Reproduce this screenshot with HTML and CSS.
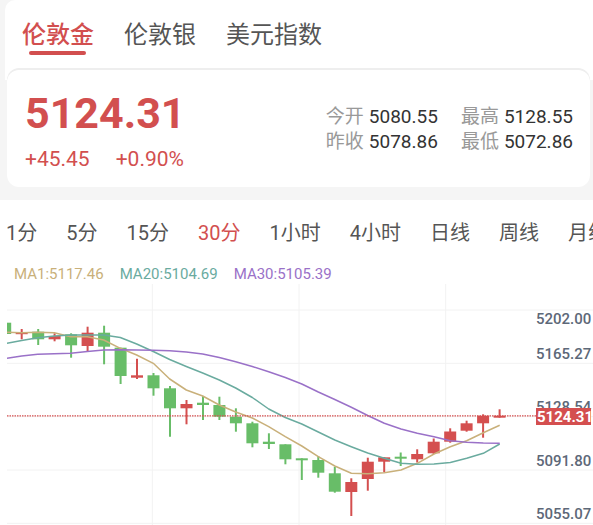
FILE: index.html
```html
<!DOCTYPE html>
<html lang="zh-CN">
<head>
<meta charset="utf-8">
<title>伦敦金</title>
<link rel="stylesheet" href="styles.css">
</head>
<body>
<div class="header">
  <div class="tab active">伦敦金</div>
  <div class="tab">伦敦银</div>
  <div class="tab">美元指数</div>
</div>
<div class="card">
  <div class="quote">
    <div class="price">5124.31</div>
    <div class="change"><span>+45.45</span><span class="pct">+0.90%</span></div>
  </div>
  <div class="stats">
    <div class="stat"><span class="lbl">今开</span><span class="val">5080.55</span></div>
    <div class="stat"><span class="lbl">最高</span><span class="val">5128.55</span></div>
    <div class="stat"><span class="lbl">昨收</span><span class="val">5078.86</span></div>
    <div class="stat"><span class="lbl">最低</span><span class="val">5072.86</span></div>
  </div>
</div>
<div class="chart-panel">
  <div class="periods">
    <span class="period">1分</span>
    <span class="period">5分</span>
    <span class="period">15分</span>
    <span class="period active">30分</span>
    <span class="period">1小时</span>
    <span class="period">4小时</span>
    <span class="period">日线</span>
    <span class="period">周线</span>
    <span class="period">月线</span>
  </div>
  <div class="legend">
    <span class="ma1">MA1:5117.46</span>
    <span class="ma20">MA20:5104.69</span>
    <span class="ma30">MA30:5105.39</span>
  </div>
  <svg class="kline" width="593" height="241" viewBox="0 284 593 241" xmlns="http://www.w3.org/2000/svg">
    <defs>
      <clipPath id="plot"><rect x="7" y="284" width="586" height="241"/></clipPath>
    </defs>
    <g class="grid">
      <line x1="7" y1="310" x2="593" y2="310"/>
      <line x1="7" y1="363.3" x2="593" y2="363.3"/>
      <line x1="7" y1="416.7" x2="593" y2="416.7"/>
      <line x1="7" y1="470" x2="593" y2="470"/>
      <line x1="7" y1="523.3" x2="593" y2="523.3"/>
      <line x1="152.3" y1="284" x2="152.3" y2="525"/>
      <line x1="299" y1="284" x2="299" y2="525"/>
      <line x1="445.7" y1="284" x2="445.7" y2="525"/>
    </g>
    <g clip-path="url(#plot)">
      <g class="dn">
        <line x1="5.2" y1="320" x2="5.2" y2="336"/><rect x="-0.8" y="322.7" width="12" height="11.3"/>
        <line x1="38.2" y1="329" x2="38.2" y2="345"/><rect x="32.2" y="331.7" width="12" height="7.6"/>
        <line x1="71.1" y1="333.3" x2="71.1" y2="357.7"/><rect x="65.1" y="334.3" width="12" height="11"/>
        <line x1="104.1" y1="325.7" x2="104.1" y2="364.3"/><rect x="98.1" y="332.7" width="12" height="14"/>
        <line x1="120.6" y1="347.7" x2="120.6" y2="384"/><rect x="114.6" y="347.7" width="12" height="28.3"/>
        <line x1="153.5" y1="373" x2="153.5" y2="395.7"/><rect x="147.5" y="375.3" width="12" height="13"/>
        <line x1="170" y1="386" x2="170" y2="436.7"/><rect x="164" y="388.3" width="12" height="20"/>
        <line x1="203" y1="396" x2="203" y2="420"/><rect x="197" y="402.7" width="12" height="2.3"/>
        <line x1="219.4" y1="396.7" x2="219.4" y2="420"/><rect x="213.4" y="405" width="12" height="11.7"/>
        <line x1="235.9" y1="408.3" x2="235.9" y2="431.7"/><rect x="229.9" y="416.7" width="12" height="6.6"/>
        <line x1="252.4" y1="421.7" x2="252.4" y2="447.3"/><rect x="246.4" y="423.3" width="12" height="20"/>
        <line x1="268.9" y1="433.3" x2="268.9" y2="449"/><rect x="262.9" y="441.7" width="12" height="2.3"/>
        <line x1="285.4" y1="444.3" x2="285.4" y2="464.3"/><rect x="279.4" y="444.3" width="12" height="15"/>
        <line x1="301.8" y1="458.3" x2="301.8" y2="480"/><rect x="295.8" y="458.3" width="12" height="2"/>
        <line x1="318.3" y1="456" x2="318.3" y2="477.7"/><rect x="312.3" y="460" width="12" height="12.7"/>
        <line x1="334.8" y1="466.7" x2="334.8" y2="492.7"/><rect x="328.8" y="473.3" width="12" height="18.4"/>
        <line x1="400.7" y1="452.5" x2="400.7" y2="466"/><rect x="394.7" y="456.7" width="12" height="2"/>
      </g>
      <g class="up">
        <line x1="21.7" y1="329" x2="21.7" y2="339.3"/><rect x="15.7" y="332" width="12" height="2.2"/>
        <line x1="54.6" y1="333.3" x2="54.6" y2="341.3"/><rect x="48.6" y="336" width="12" height="3.3"/>
        <line x1="87.6" y1="326.7" x2="87.6" y2="351.7"/><rect x="81.6" y="332.7" width="12" height="13.3"/>
        <line x1="137" y1="358.7" x2="137" y2="379"/><rect x="131" y="375.3" width="12" height="2.4"/>
        <line x1="186.5" y1="400" x2="186.5" y2="424.3"/><rect x="180.5" y="404" width="12" height="4.3"/>
        <line x1="351.3" y1="478.3" x2="351.3" y2="516"/><rect x="345.3" y="482" width="12" height="10"/>
        <line x1="367.8" y1="457.7" x2="367.8" y2="490.7"/><rect x="361.8" y="461.7" width="12" height="17.3"/>
        <line x1="384.2" y1="457.3" x2="384.2" y2="472.3"/><rect x="378.2" y="457.3" width="12" height="4.4"/>
        <line x1="417.2" y1="449.3" x2="417.2" y2="462.5"/><rect x="411.2" y="454" width="12" height="5.3"/>
        <line x1="433.7" y1="438.5" x2="433.7" y2="454"/><rect x="427.7" y="441.7" width="12" height="11.6"/>
        <line x1="450.2" y1="428.3" x2="450.2" y2="442.7"/><rect x="444.2" y="431.5" width="12" height="10.2"/>
        <line x1="466.6" y1="420.7" x2="466.6" y2="431.7"/><rect x="460.6" y="423.3" width="12" height="7.4"/>
        <line x1="483.1" y1="414.3" x2="483.1" y2="437.7"/><rect x="477.1" y="415.7" width="12" height="7.6"/>
        <line x1="499.6" y1="409.3" x2="499.6" y2="417.7"/><rect x="493.6" y="415.7" width="12" height="2"/>
      </g>
      <polyline class="l-ma1" points="7,332.3 21.7,332.7 37.7,332.3 54.3,332.7 70.7,336.7 87.3,336.7 103.7,340 120.3,348.3 136.7,355 153.3,363.3 169.7,379 186.3,390 202.7,396 219.3,405 235.7,412 252.3,418 268.7,426.7 285.3,436.7 301.8,446 318.3,456.7 334.8,466 351.3,473.3 367.7,473.7 384.3,472.7 401,470 417.3,463.3 434,454 450.3,446.7 466.7,440.7 483.3,432.7 499.7,425.3"/>
      <polyline class="l-ma20" points="7,343.3 21.7,340.5 37.7,337.7 54.3,336 70.7,335 87.3,335 103.7,335 120.3,337.5 136.7,344 153.3,351.5 169.7,359.5 186.3,366.5 202.7,373 219.3,380 235.7,388 252.3,397.5 268.7,409 285.3,417.5 301.8,424 318.3,432 334.8,440 351.3,446.7 367.7,453 384.3,458.3 401,463.3 417.3,464.3 434,464 450.3,462.5 466.7,458.3 483.3,453.3 499.7,444"/>
      <polyline class="l-ma30" points="7,358.3 21.7,356 37.7,354.3 54.3,353.8 70.7,353.3 87.3,351.5 103.7,350 120.3,349.7 136.7,350 153.3,350.2 169.7,350.7 186.3,352 202.7,354 219.3,357.5 235.7,361.7 252.3,366.5 268.7,371.7 285.3,377.5 301.8,384 318.3,392 334.8,399.5 351.3,407.3 367.7,415.5 384.3,423.3 401,429 417.3,433.3 434,436.7 450.3,440.7 466.7,442.3 483.3,443 499.7,443.3"/>
    </g>
    <line class="last" x1="7" y1="415.8" x2="536" y2="415.8"/>
    <g class="axis">
      <text x="536" y="324.3">5202.00</text>
      <text x="536" y="358.6">5165.27</text>
      <text x="536" y="412.3">5128.54</text>
      <text x="536" y="466.3">5091.80</text>
      <text x="536" y="518.6">5055.07</text>
    </g>
    <rect class="tag" x="536" y="408" width="55" height="17"/>
    <text class="tag-text" x="537" y="422">5124.31</text>
  </svg>
</div>
</body>
</html>
```
FILE: styles.css
```css
* { box-sizing: border-box; }
html, body { margin: 0; padding: 0; }
body {
  width: 593px;
  height: 525px;
  overflow: hidden;
  background: #f5f5f5;
  font-family: Roboto, "Noto Sans CJK SC", sans-serif;
}
.header {
  height: 80px;
  margin-left: 5px;
  background: #fff;
  border-top-left-radius: 10px;
  display: flex;
  gap: 30px;
  padding: 17px 0 0 17px;
}
.tab {
  position: relative;
  font-family: "Noto Sans CJK SC", sans-serif;
  font-size: 24px;
  line-height: 32px;
  height: 32px;
  color: #555;
}
.tab.active {
  color: #d24f4f;
  font-weight: 500;
}
.tab.active::after {
  content: "";
  position: absolute;
  left: 7px;
  top: 34px;
  width: 57px;
  height: 4px;
  border-radius: 2px;
  background: #d24f4f;
}
.card {
  position: relative;
  margin: -10px 3px 0 7px;
  height: 117px;
  background: #fff;
  border-radius: 12px;
  box-shadow: 0 -2px 0 #eeeeee;
  display: flex;
  justify-content: space-between;
  padding: 21px 17px 0 18px;
}
.price {
  font-size: 43px;
  line-height: 44px;
  font-weight: 700;
  color: #d24f4f;
}
.change {
  margin-top: 12px;
  font-size: 21px;
  line-height: 24px;
  color: #d24f4f;
  display: flex;
  gap: 26px;
}
.stats {
  display: grid;
  grid-template-columns: auto auto;
  column-gap: 23px;
  padding-top: 13px;
  align-content: start;
}
.stat {
  font-size: 19px;
  line-height: 25px;
  white-space: nowrap;
}
.lbl { color: #999; margin-right: 5px; }
.val { color: #333; }
.chart-panel {
  margin-top: 13px;
  background: #fff;
  height: 325px;
}
.periods {
  display: flex;
  gap: 29px;
  padding: 20px 0 0 6px;
  height: 63.5px;
  white-space: nowrap;
  overflow: hidden;
}
.period {
  flex: none;
  font-size: 20px;
  line-height: 26px;
  color: #555;
}
.period.active { color: #d24f4f; }
.legend {
  display: flex;
  gap: 16px;
  padding-left: 14px;
  height: 20px;
  font-size: 15px;
  line-height: 20px;
}
.ma1 { color: #c9b07a; }
.ma20 { color: #6aab9f; }
.ma30 { color: #9a71c8; }
.kline { display: block; }
.grid line { stroke: #f2f2f2; stroke-width: 1; }
.dn line { stroke: #68bd68; stroke-width: 2; }
.dn rect { fill: #68bd68; }
.up line { stroke: #d44f4f; stroke-width: 2; }
.up rect { fill: #d44f4f; }
.l-ma1, .l-ma20, .l-ma30 { fill: none; stroke-width: 1.5; stroke-linejoin: round; }
.l-ma1 { stroke: #c9b07a; }
.l-ma20 { stroke: #6aab9f; }
.l-ma30 { stroke: #9a71c8; }
.last { stroke: #d44f4f; stroke-width: 1.2; stroke-dasharray: 1.5 1; }
.axis text {
  font-family: Roboto, sans-serif;
  font-size: 15px;
  font-weight: 500;
  fill: #5d6878;
}
.tag { fill: #d44f4f; }
.tag-text {
  font-family: Roboto, sans-serif;
  font-size: 15px;
  font-weight: 700;
  fill: #fff;
}
```
